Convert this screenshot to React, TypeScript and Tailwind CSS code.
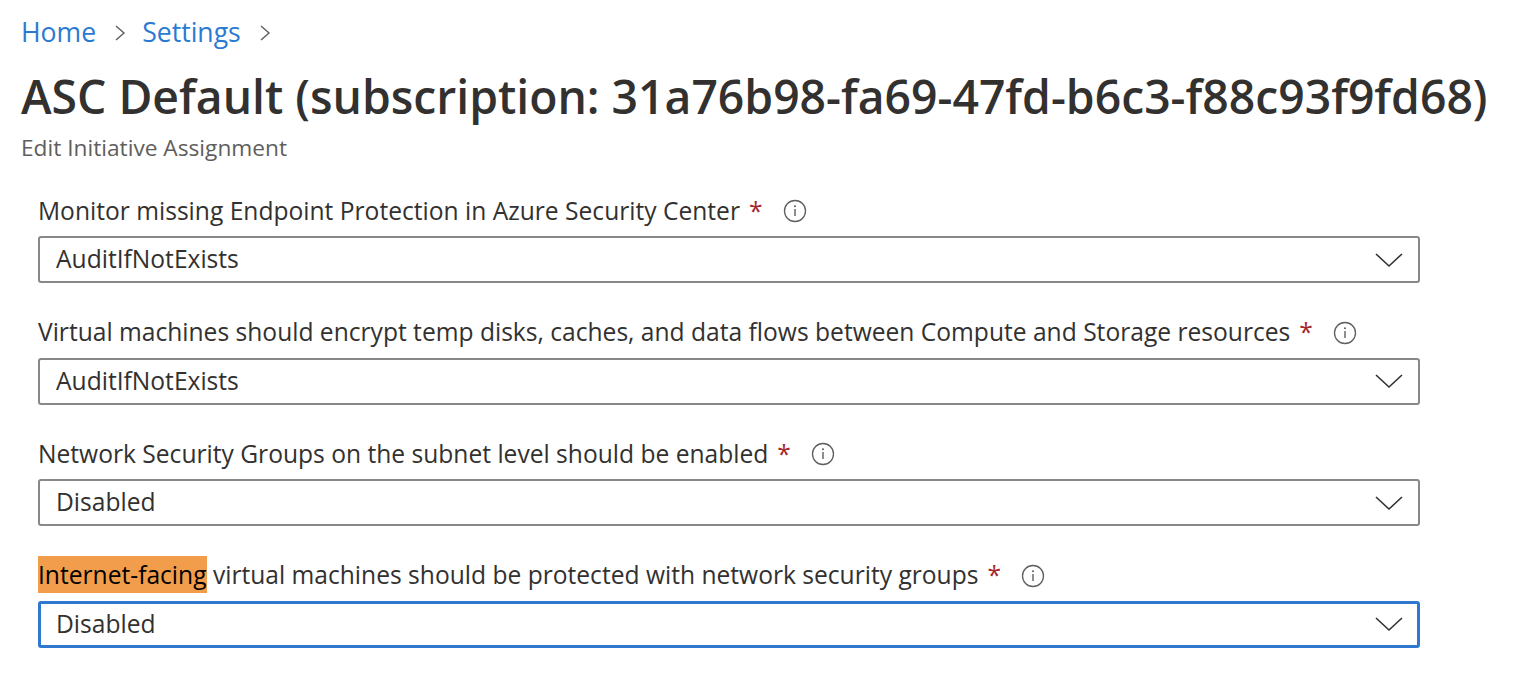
import { ReactNode } from 'react';

const FONT = { fontFamily: '"Open Sans", "Noto Sans", Arial, sans-serif' };

function ChevronRight() {
	return (
		<svg width="14" height="20" viewBox="0 0 14 20" className="text-[#605e5c]">
			<path d="M3 3 L11 10 L3 17" fill="none" stroke="currentColor" strokeWidth="1.4" />
		</svg>
	);
}

function ChevronDown() {
	return (
		<svg width="28" height="16" viewBox="0 0 28 16" className="text-[#323130]">
			<path d="M1 2 L14 14 L27 2" fill="none" stroke="currentColor" strokeWidth="1.6" />
		</svg>
	);
}

function InfoIcon() {
	return (
		<svg width="24" height="24" viewBox="0 0 24 24" className="text-[#605e5c]">
			<circle cx="12" cy="12" r="10.5" fill="none" stroke="currentColor" strokeWidth="1.3" />
			<circle cx="12" cy="7.3" r="1" fill="currentColor" />
			<path d="M12 10 V17" stroke="currentColor" strokeWidth="1.4" />
		</svg>
	);
}

interface FieldProps {
	label: ReactNode;
	value: string;
	focused?: boolean;
}

function Field({ label, value, focused }: FieldProps) {
	return (
		<div className="flex flex-col">
			<div className="flex items-center h-[50px] text-[24.6px] text-[#323130]">
				<span>{label}</span>
				<span className="ml-[9px] text-[#a4262c]">*</span>
				<span className="ml-[20px] flex items-center">
					<InfoIcon />
				</span>
			</div>
			<div
				className={
					focused
						? 'flex items-center justify-between h-[47px] w-[1382px] rounded-[3px] border-[3px] border-[#2f78cf] pl-[15px] pr-[14px]'
						: 'flex items-center justify-between h-[47px] w-[1382px] rounded-[3px] border-2 border-[#8a8886] pl-[16px] pr-[15px]'
				}
			>
				<span className="text-[24.6px] text-[#323130]">{value}</span>
				<ChevronDown />
			</div>
		</div>
	);
}

export default function App() {
	return (
		<div className="min-h-[676px] w-[1516px] bg-white" style={FONT}>
			<div className="pl-[21px] pt-[14px]">
				<nav className="flex items-center h-[38px] text-[26.6px] text-[#2a7ad2]">
					<span>Home</span>
					<span className="ml-[17px] mr-[15px] flex items-center">
						<ChevronRight />
					</span>
					<span>Settings</span>
					<span className="ml-[17px] flex items-center">
						<ChevronRight />
					</span>
				</nav>
				<h1 className="mt-[17px] text-[46.3px] leading-[56px] font-semibold text-[#323130]">
					ASC Default (subscription: 31a76b98-fa69-47fd-b6c3-f88c93f9fd68)
				</h1>
				<div className="mt-[8px] text-[22.7px] leading-[30px] text-[#605e5c]">Edit Initiative Assignment</div>
			</div>
			<div className="pl-[38px] mt-[23px] flex flex-col gap-[24.5px]">
				<Field label="Monitor missing Endpoint Protection in Azure Security Center" value="AuditIfNotExists" />
				<Field
					label="Virtual machines should encrypt temp disks, caches, and data flows between Compute and Storage resources"
					value="AuditIfNotExists"
				/>
				<Field label="Network Security Groups on the subnet level should be enabled" value="Disabled" />
				<Field
					label={
						<>
							<span className="bg-[#f29d4b] py-[2px] text-black">Internet-facing</span> virtual machines
							should be protected with network security groups
						</>
					}
					value="Disabled"
					focused
				/>
			</div>
		</div>
	);
}
